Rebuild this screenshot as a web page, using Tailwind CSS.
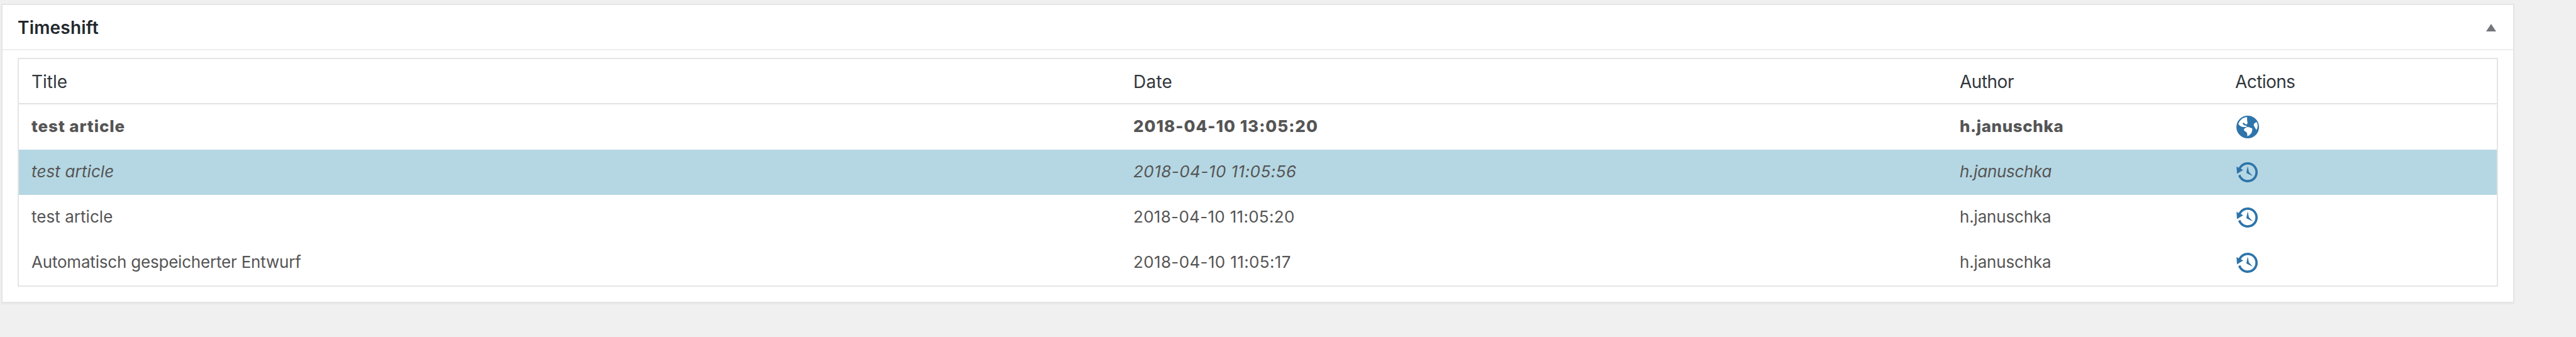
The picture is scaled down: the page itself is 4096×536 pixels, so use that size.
<!DOCTYPE html>
<html lang="de">
<head>
<meta charset="utf-8">
<title>Timeshift</title>
<script src="https://cdn.jsdelivr.net/npm/@tailwindcss/browser@4"></script>
</head>
<body class="h-[536px] w-[4096px] overflow-hidden bg-[#f0f0f0] pl-[2px] pt-[6px] font-['Inter',sans-serif] text-[26px] text-[#555]">
<svg class="hidden">
  <symbol id="globe" viewBox="0 0 20 20">
    <path fill-rule="evenodd" d="M10 1a9 9 0 1 0 0 18 9 9 0 0 0 0-18zM9.6 2.1C9.4 3.4 9.5 4.8 9.8 6.2c.1.5 0 1.1-.3 1.5-.7.3-1.5.1-2-.6-.4-.5-.9-.7-1.3-.3-.4.6.1 1.3.8 1.700l2 .6c.5.2.4.7-.1.8-1.500.3-3.600-.1-4.700-.7-.6-.4-1.100-.9-1.600-1.300C3.300 4.600 6 2.300 9.600 2.100zM8.300 10.600c1.100-.6 2.300-.8 3.400-.2.600.400 1.600.3 1.900.9.200 1-.1 2.200-.5 3.200-.7 1.300-1.900 2.200-3.300 2.900-.2-1-.1-2-.5-2.900-.500-.7-1.700-1-2.100-1.700-.400-.7-.1-1.300.4-1.700zM17.100 6c-1.300.5-2.300 1.400-2.300 2.400 0 .7.4 1.100.8 1.700.400.8.900 1.700 1.500 2.100.5-.9.800-2.100.8-3.200 0-1.100-.3-2.100-.8-3z"/>
  </symbol>
  <symbol id="backup" viewBox="0 0 20 20">
    <path d="M13.65 2.88c3.93 2.01 5.48 6.84 3.47 10.77s-6.83 5.48-10.77 3.47c-1.87-.96-3.2-2.56-3.86-4.4l1.64-1.03c.45 1.57 1.52 2.95 3.08 3.76 3.01 1.54 6.69.35 8.23-2.66 1.55-3.01.36-6.69-2.65-8.24C9.78 3.01 6.1 4.2 4.56 7.21l1.88.97-4.95 3.08-.39-5.82 1.78.91C4.9 2.4 9.75.89 13.65 2.88zm-4.36 7.83C9.11 10.53 9 10.28 9 10c0-.07.03-.12.04-.19h-.01L10 5l.97 4.81L14 13l-4.5-2.12.02-.02c-.08-.04-.16-.09-.23-.15z"/>
  </symbol>
</svg>
<section class="h-[476px] w-[3996px] border-2 border-[#e5e5e5] bg-white shadow-[0_2px_2px_rgba(0,0,0,0.04)]">
  <header class="flex h-[72px] items-center justify-between border-b-2 border-[#eee] pl-6 pr-[27px]">
    <h2 class="pt-[2px] text-[28px] font-semibold leading-[68px] tracking-[0.19px] text-[#23282d]">Timeshift</h2>
    <svg class="mt-[2px] h-3 w-4 fill-[#72777c]" viewBox="0 0 16 12"><path d="M8 0l8 12H0z"/></svg>
  </header>
  <div class="mx-6 mt-3 h-[364px] border-2 border-[#e5e5e5]">
    <div class="grid h-[72px] grid-cols-[1752px_1314px_438px_436px] items-center border-b-2 border-[#e1e1e1] pt-[2px] text-[28px] text-[#32373c] *:pl-5">
      <div>Title</div><div class="tracking-[0.23px]">Date</div><div class="tracking-[-0.5px]">Author</div><div class="tracking-[-0.58px]">Actions</div>
    </div>
    <div class="grid h-[72px] grid-cols-[1752px_1314px_438px_436px] items-center font-extrabold *:pb-[3px] *:pl-5">
      <div class="tracking-[0.9px]">test article</div><div class="tracking-[0.98px]">2018-04-10 13:05:20</div><div class="tracking-[0.57px]">h.januschka</div><div class="pt-[3px]"><svg class="size-10 fill-[#2e74aa]"><use href="#globe"/></svg></div>
    </div>
    <div class="grid h-[72px] grid-cols-[1752px_1314px_438px_436px] items-center bg-[#b5d7e3] italic *:pb-[3px] *:pl-5">
      <div class="tracking-[0.12px]">test article</div><div class="tracking-[0.47px]">2018-04-10 11:05:56</div><div class="tracking-[-0.3px]">h.januschka</div><div class="pt-[3px]"><svg class="size-10 fill-[#2e74aa]"><use href="#backup"/></svg></div>
    </div>
    <div class="grid h-[72px] grid-cols-[1752px_1314px_438px_436px] items-center *:pb-[3px] *:pl-5">
      <div class="tracking-[0.04px]">test article</div><div class="tracking-[0.3px]">2018-04-10 11:05:20</div><div class="tracking-[-0.17px]">h.januschka</div><div class="pt-[3px]"><svg class="size-10 fill-[#2e74aa]"><use href="#backup"/></svg></div>
    </div>
    <div class="grid h-[72px] grid-cols-[1752px_1314px_438px_436px] items-center *:pb-[3px] *:pl-5">
      <div class="tracking-[-0.2px]">Automatisch gespeicherter Entwurf</div><div class="tracking-[0.36px]">2018-04-10 11:05:17</div><div class="tracking-[-0.17px]">h.januschka</div><div class="pt-[3px]"><svg class="size-10 fill-[#2e74aa]"><use href="#backup"/></svg></div>
    </div>
  </div>
</section>
</body>
</html>
